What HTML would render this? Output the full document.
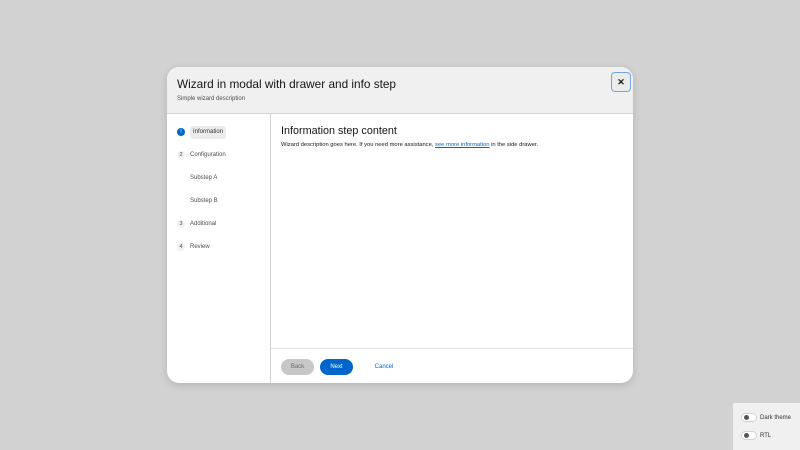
<!DOCTYPE html>
<html><head><style>
*{box-sizing:border-box;margin:0;padding:0}
body{width:800px;height:450px;background:#d2d2d2;font-family:"Liberation Sans",sans-serif;position:relative;overflow:hidden;color:#151515}
.modal{position:absolute;left:167px;top:67px;width:466px;height:316px;background:#fff;border-radius:12px;overflow:hidden;box-shadow:0 2px 8px rgba(0,0,0,.15)}
.head{height:47px;background:#f0f0f0;border-bottom:1px solid #d2d2d2;position:relative}
.head h1{position:absolute;left:10px;top:9px;font-size:11.8px;font-weight:normal;line-height:16px}
.head p{position:absolute;left:10px;top:28px;font-size:6px;color:#4d4d4d;line-height:8px}
.close{position:absolute;left:444px;top:5px;width:20px;height:20px;border:1.5px solid #73a5e6;border-radius:4px;background:#ececec;font-size:9px;font-weight:bold;display:flex;align-items:center;justify-content:center}
.nav{position:absolute;left:0;top:47px;width:104px;bottom:0;border-right:1px solid #d2d2d2}
.step{position:absolute;left:10px;font-size:6px;color:#4d4d4d;height:12px;line-height:12px;display:flex;align-items:center}
.num{display:inline-block;width:8px;height:8px;border-radius:50%;text-align:center;line-height:8px;font-size:5.5px;margin-right:5px;background:#f0f0f0;color:#4d4d4d}
.main{position:absolute;left:104px;top:47px;right:0;bottom:0}
.main h2{position:absolute;left:10px;top:10px;font-size:10.8px;font-weight:normal;line-height:14px}
.main p{position:absolute;left:10px;top:27px;font-size:5.8px;line-height:8px}
.main a{color:#0066cc;text-decoration:underline}
.foot{position:absolute;left:0;right:0;bottom:0;height:35px;border-top:1px solid #e0e0e0}
.btn{position:absolute;top:10px;height:16px;border-radius:8px;font-size:6px;line-height:17px;text-align:center}
.panel{position:absolute;left:733px;top:403px;width:67px;height:47px;background:#f0f0f0}
.tg{position:absolute;left:8px;width:16px;height:9px;border-radius:5px;background:#fff;border:1px solid #d2d2d2}
.tg::after{content:"";position:absolute;left:2px;top:1px;width:5px;height:5px;border-radius:50%;background:#555}
.pl{position:absolute;left:27px;font-size:6px;color:#333;line-height:10px}
</style></head><body>
<div class="modal">
 <div class="head"><h1>Wizard in modal with drawer and info step</h1><p>Simple wizard description</p><div class="close">✕</div></div>
 <div class="nav">
  <div class="step" style="top:12px"><span class="num" style="background:#0066cc;color:#fff">!</span><span style="background:#ececec;padding:2px 3px;border-radius:3px;color:#333;line-height:9px">Information</span></div>
  <div class="step" style="top:35px"><span class="num">2</span>Configuration</div>
  <div class="step" style="top:58px;left:23px">Substep A</div>
  <div class="step" style="top:81px;left:23px">Substep B</div>
  <div class="step" style="top:104px"><span class="num">3</span>Additional</div>
  <div class="step" style="top:127px"><span class="num">4</span>Review</div>
 </div>
 <div class="main">
  <h2>Information step content</h2>
  <p>Wizard description goes here. If you need more assistance, <a>see more information</a> in the side drawer.</p>
  <div class="foot">
   <div class="btn" style="left:10px;width:33px;background:#c7c7c7;color:#6a6a6a">Back</div>
   <div class="btn" style="left:49px;width:33px;background:#0066cc;color:#fff">Next</div>
   <div class="btn" style="left:96px;width:34px;color:#0066cc">Cancel</div>
  </div>
 </div>
</div>
<div class="panel">
 <div class="tg" style="top:10px"></div><div class="pl" style="top:10px">Dark theme</div>
 <div class="tg" style="top:28px"></div><div class="pl" style="top:28px">RTL</div>
</div>
</body></html>
